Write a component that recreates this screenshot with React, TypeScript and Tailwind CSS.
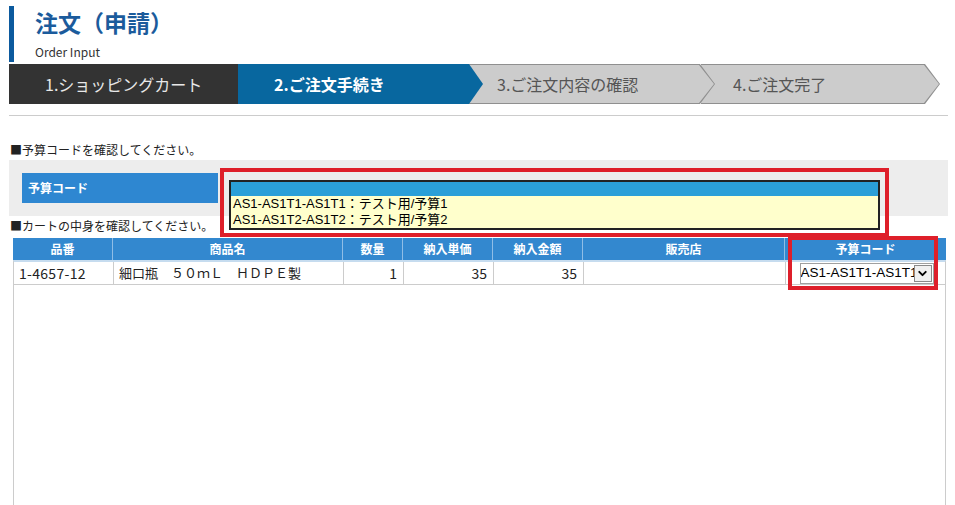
import { ChevronDown } from "lucide-react";

const cols = "grid grid-cols-[100px_230px_60px_90px_90px_202px_161px]";

const budgetOptions = [
  "AS1-AS1T1-AS1T1：テスト用/予算1",
  "AS1-AS1T2-AS1T2：テスト用/予算2",
];

function Steps() {
  return (
    <div className="ml-[9px] mt-[2px] flex h-[40px] w-[932px] text-[16px]">
      <div className="flex w-[229px] shrink-0 items-center bg-[#333333] pl-[36px] text-[#e8e8e8]">
        1.ショッピングカート
      </div>
      <div className="relative z-30 flex w-[245px] shrink-0 items-center bg-[#08679f] pl-[36px] font-bold text-white [clip-path:polygon(0_0,calc(100%_-_14px)_0,100%_50%,calc(100%_-_14px)_100%,0_100%)]">
        2.ご注文手続き
      </div>
      <div className="relative z-20 -ml-[14px] w-[246px] shrink-0 bg-[#8f8f8f] [clip-path:polygon(0_0,calc(100%_-_15px)_0,100%_50%,calc(100%_-_15px)_100%,0_100%)]">
        <div className="absolute top-px right-px bottom-px left-0 flex items-center bg-[#cccccc] pl-[28px] text-[#555555] [clip-path:polygon(0_0,calc(100%_-_15px)_0,100%_50%,calc(100%_-_15px)_100%,0_100%)]">
          3.ご注文内容の確認
        </div>
      </div>
      <div className="relative z-10 -ml-[14px] w-[239px] shrink-0 bg-[#8f8f8f] [clip-path:polygon(0_0,calc(100%_-_15px)_0,100%_50%,calc(100%_-_15px)_100%,0_100%)]">
        <div className="absolute top-px right-px bottom-px left-0 flex items-center bg-[#cccccc] pl-[32px] text-[#555555] [clip-path:polygon(0_0,calc(100%_-_15px)_0,100%_50%,calc(100%_-_15px)_100%,0_100%)]">
          4.ご注文完了
        </div>
      </div>
    </div>
  );
}

export default function App() {
  return (
    <div className="relative flex h-[505px] w-[955px] flex-col overflow-hidden bg-white font-['Noto_Sans_CJK_JP',sans-serif] text-[#222222]">
      {/* title */}
      <div className="ml-[9px] mt-[6px] border-l-[5px] border-[#0c5a9e] pb-[2px] pl-[21px] pt-[2px]">
        <h1 className="text-[23px] font-bold leading-[28px] text-[#1b5b9c]">注文（申請）</h1>
        <div className="mt-[8px] text-[12px] leading-[16px] text-[#333333]">Order Input</div>
      </div>

      <Steps />

      <div className="ml-[9px] mt-[11px] h-px w-[939px] bg-[#cccccc]" />

      <div className="ml-[10px] mt-[26px] text-[12px] leading-[16px]">■予算コードを確認してください。</div>
      <div className="ml-[9px] mt-[2px] h-[56px] w-[939px] bg-[#ededed] pl-[13px] pt-[13px]">
        <div className="flex h-[30px] w-[196px] items-center bg-[#2e87d1] pl-[6px] text-[12px] font-bold text-white">
          予算コード
        </div>
      </div>

      <div className="ml-[10px] mt-[2px] text-[12px] leading-[16px]">■カートの中身を確認してください。</div>

      {/* cart table */}
      <div className="ml-[13px] mt-[4px] flex w-[933px] flex-1 flex-col text-[13px]">
        <div className={`${cols} h-[22px] bg-[#3388cf] text-[12px] font-bold text-white`}>
          {["品番", "商品名", "数量", "納入単価", "納入金額", "販売店", "予算コード"].map((h, i) => (
            <div key={h} className={`flex items-center justify-center ${i < 6 ? "border-r border-[#8fbde6]" : ""}`}>
              {h}
            </div>
          ))}
        </div>
        <div className={`${cols} h-[25px] border-x border-b border-[#cccccc] border-t-2 border-t-[#c6dcef]`}>
          <div className="flex items-center border-r border-[#cccccc] pl-[5px] text-[14px] tracking-[0.3px]">1-4657-12</div>
          <div className="flex items-center border-r border-[#cccccc] pl-[5px]">細口瓶　５０ｍＬ　ＨＤＰＥ製</div>
          <div className="flex items-center justify-end border-r border-[#cccccc] pr-[6px] text-[14px]">1</div>
          <div className="flex items-center justify-end border-r border-[#cccccc] pr-[6px] text-[14px]">35</div>
          <div className="flex items-center justify-end border-r border-[#cccccc] pr-[6px] text-[14px]">35</div>
          <div className="border-r border-[#cccccc]" />
          <div className="flex items-center justify-center">
            <div className="flex h-[21px] w-[134px] items-center border border-[#a0a0a0] bg-white">
              <span className="min-w-0 flex-1 overflow-hidden whitespace-nowrap font-['Liberation_Sans',sans-serif] text-[13.5px] text-black">
                {budgetOptions[0]}
              </span>
              <span className="mr-px flex h-[17px] w-[18px] shrink-0 items-center justify-center border border-[#8a8a8a] bg-[#f0f0f0]">
                <ChevronDown size={13} strokeWidth={3.5} className="text-black" />
              </span>
            </div>
          </div>
        </div>
        <div className="flex-1 border-x border-[#cccccc]" />
      </div>

      {/* open budget list */}
      <div className="absolute left-[229px] top-[180px] w-[651px] border-2 border-[#222222] bg-[#ffffcc] font-['Liberation_Sans','Noto_Sans_CJK_JP',sans-serif] text-[13px] leading-[16px] text-black">
        <div className="h-[14px] bg-[#2a9fd8]" />
        {budgetOptions.map((o) => (
          <div key={o} className="h-[16px] whitespace-nowrap pl-[2px]">
            {o}
          </div>
        ))}
      </div>

      {/* highlight frames */}
      <div className="absolute left-[220px] top-[168px] h-[69px] w-[669px] border-4 border-[#de1f2a]" />
      <div className="absolute left-[788px] top-[236px] h-[54px] w-[150px] border-4 border-[#de1f2a]" />
    </div>
  );
}
